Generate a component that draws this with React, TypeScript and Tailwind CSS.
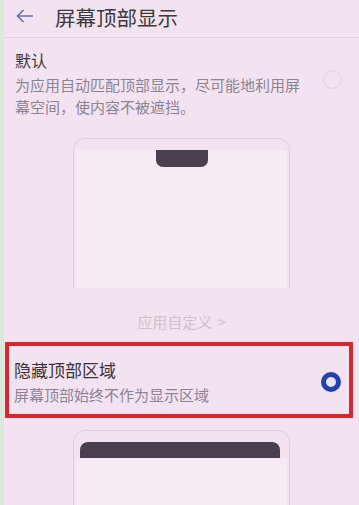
const font = { fontFamily: '"Noto Sans CJK SC", "Noto Sans", sans-serif' };

function Radio({ checked }: { checked?: boolean }) {
  return checked ? (
    <span className="block h-[20px] w-[20px] shrink-0 rounded-full border-[5px] border-[#2340ae] bg-[#e9e2f2]" />
  ) : (
    <span className="block h-[19px] w-[19px] shrink-0 rounded-full border-[1.5px] border-[#ddd3dc]" />
  );
}

export default function App() {
  return (
    <div
      style={font}
      className="flex h-[505px] w-[359px] flex-col overflow-hidden border-l-4 border-[#d9ead6] bg-[#f3e3f1]"
    >
      <header className="flex h-[38px] shrink-0 items-center border-b border-[#e0d2de] pl-[12px]">
        <svg width="18" height="14" viewBox="0 0 18 14" fill="none" className="mt-[-6px]">
          <path d="M7.5 1 L1.5 7 L7.5 13 M1.5 7 H17" stroke="#6f6f9e" strokeWidth="1.6" />
        </svg>
        <h1 className="ml-[21px] mt-[-4px] text-[20.5px] leading-[28px] text-[#3b3a3d]">屏幕顶部显示</h1>
      </header>

      <section className="flex items-start pl-[11px] pr-[17px] pt-[11px]">
        <div className="w-[290px]">
          <p className="text-[16px] leading-[22px] text-[#3a383c]">默认</p>
          <p className="mt-[3px] text-[15px] leading-[22px] text-[#8b8491]">
            为应用自动匹配顶部显示，尽可能地利用屏幕空间，使内容不被遮挡。
          </p>
        </div>
        <div className="ml-auto mt-[21px]">
          <Radio />
        </div>
      </section>

      <div className="mx-auto mt-[20px] h-[150px] w-[217px] shrink-0 rounded-t-[12px] border-x border-t border-[#ddd0db] px-[2px] pt-[11px]">
        <div className="h-full rounded-t-[2px] bg-[#f6ebf4]">
          <div className="mx-auto h-[17px] w-[52px] rounded-b-[7px] bg-[#4a3f4e]" />
        </div>
      </div>

      <p className="mt-[23px] text-center text-[15px] leading-[22px] text-[#cdc1cc]">
        应用自定义 <span className="ml-[2px]">&gt;</span>
      </p>

      <section className="ml-[1px] mr-[6px] mt-[9px] flex items-center border-4 border-[#d8272e] pb-[8px] pl-[5px] pr-[8px] pt-[13px]">
        <div>
          <p className="text-[17px] leading-[22px] text-[#363438]">隐藏顶部区域</p>
          <p className="mt-[3px] text-[15px] leading-[22px] text-[#8b8491]">屏幕顶部始终不作为显示区域</p>
        </div>
        <div className="ml-auto mt-[-2px]">
          <Radio checked />
        </div>
      </section>

      <div className="mx-auto mt-[12px] h-[120px] w-[217px] shrink-0 rounded-t-[12px] border-x border-t border-[#ddd0db] pt-[11px]">
        <div className="ml-[6px] h-[16px] w-[200px] rounded-t-[8px] bg-[#4a3f4e]" />
        <div className="mx-[2px] h-full bg-[#f6ebf4]" />
      </div>
    </div>
  );
}
